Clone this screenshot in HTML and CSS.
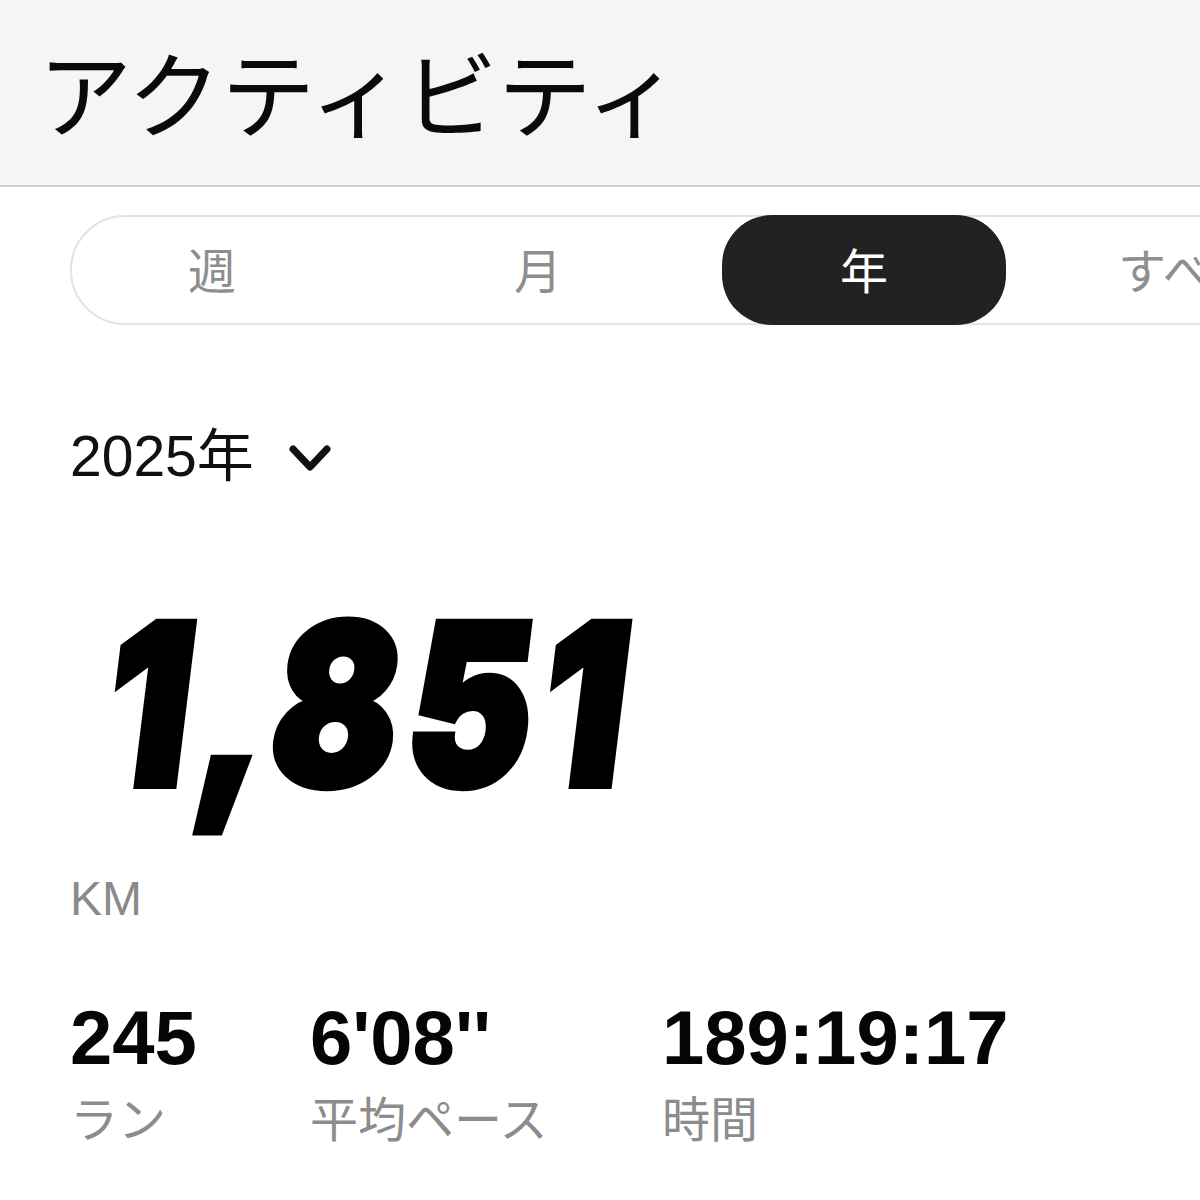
FILE: index.html
```html
<!DOCTYPE html>
<html lang="ja">
<head>
<meta charset="utf-8">
<link rel="stylesheet" href="styles.css">
</head>
<body>
<header class="topbar"><h1 class="title">アクティビティ</h1></header>
<nav class="segments">
  <div class="seg">週</div>
  <div class="seg">月</div>
  <div class="seg seg-active">年</div>
  <div class="seg">すべて</div>
</nav>
<div class="year">
  <span class="year-text">2025年</span>
  <svg class="chevron" width="44" height="30" viewBox="0 0 44 30"><path d="M5 6 L22 24 L39 6" fill="none" stroke="#111" stroke-width="7" stroke-linecap="round" stroke-linejoin="round"/></svg>
</div>
<div class="total"><span class="big">1,851</span></div>
<div class="unit">KM</div>
<div class="stats">
  <div class="stat stat-runs"><div class="value">245</div><div class="label">ラン</div></div>
  <div class="stat stat-pace"><div class="value">6'08''</div><div class="label">平均ペース</div></div>
  <div class="stat stat-time"><div class="value">189:19:17</div><div class="label">時間</div></div>
</div>
</body>
</html>
```
FILE: styles.css
```css
html, body {
  margin: 0;
  padding: 0;
  background: #ffffff;
}
body {
  width: 1200px;
  height: 1200px;
  overflow: hidden;
  font-family: "Liberation Sans", "Noto Sans CJK JP", sans-serif;
  color: #111;
}
.topbar {
  height: 185px;
  background: #f5f5f5;
  border-bottom: 2px solid #cfcfcf;
  display: flex;
  align-items: center;
  padding-left: 38px;
}
.title {
  margin: 0;
  font-family: "Noto Sans CJK JP", sans-serif;
  font-weight: 400;
  font-size: 94px;
  line-height: 1;
  color: #0a0a0a;
  padding-bottom: 6px;
}
.segments {
  margin-top: 28px;
  margin-left: 70px;
  width: 1300px;
  height: 106px;
  border: 2px solid #e3e3e3;
  border-radius: 55px;
  display: flex;
  gap: 42px;
  box-sizing: content-box;
}
.seg {
  flex: 0 0 284px;
  display: flex;
  align-items: center;
  justify-content: center;
  font-family: "Noto Sans CJK JP", sans-serif;
  font-size: 48px;
  color: #8e8e8e;
  margin: -2px 0;
  padding-bottom: 4px;
  box-sizing: border-box;
}
.seg:first-child { margin-left: -2px; }
.seg-active {
  background: #222222;
  color: #ffffff;
  border-radius: 50px;
}
.seg:last-child {
  justify-content: flex-start;
  padding-left: 70px;
}
.year {
  margin-top: 96px;
  margin-left: 70px;
  height: 70px;
  display: flex;
  align-items: center;
  gap: 34px;
}
.year-text {
  font-size: 57px;
  line-height: 1;
  color: #111;
}
.chevron { display: block; margin-top: 4px; }
.total {
  margin-top: 102px;
  margin-left: 122px;
  height: 282px;
}
.big {
  display: inline-block;
  font-family: "Inter", "Roboto", sans-serif;
  font-weight: 900;
  font-size: 223px;
  line-height: 1;
  color: #000;
  letter-spacing: 12px;
  -webkit-text-stroke: 8px #000;
  transform-origin: left top;
  transform: skewX(-7deg) scaleX(0.83);
}
.unit {
  margin-left: 70px;
  font-size: 48px;
  line-height: 1;
  color: #8a8a8a;
}
.stats {
  margin-top: 77px;
  margin-left: 70px;
  display: flex;
}
.stat-runs { width: 240px; }
.stat-pace { width: 352px; }
.value {
  font-size: 76px;
  font-weight: 700;
  line-height: 1;
  color: #050505;
}
.label {
  margin-top: 16px;
  font-family: "Noto Sans CJK JP", sans-serif;
  font-size: 48px;
  line-height: 1;
  color: #8c8c8c;
}
```
